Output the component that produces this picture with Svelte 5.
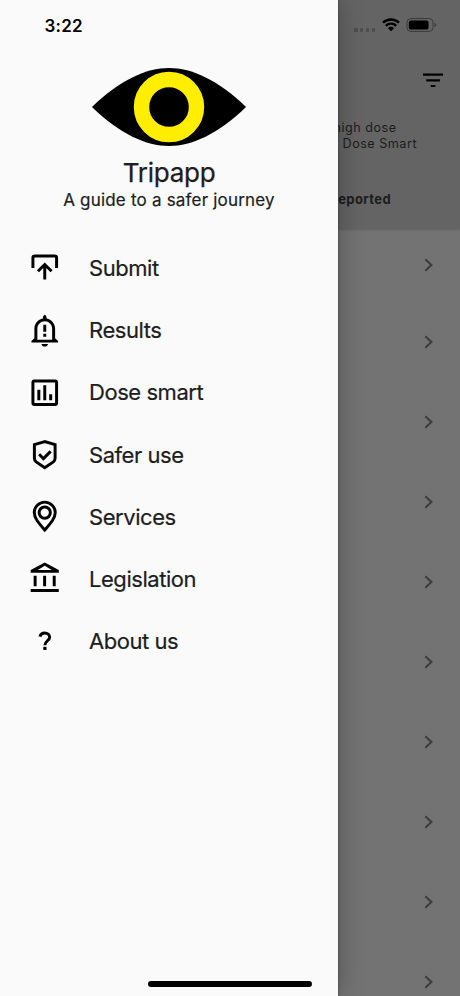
<script lang="ts">
    const menu = [
        { label: 'Submit', icon: 'submit' },
        { label: 'Results', icon: 'results' },
        { label: 'Dose smart', icon: 'dose' },
        { label: 'Safer use', icon: 'safer' },
        { label: 'Services', icon: 'services' },
        { label: 'Legislation', icon: 'legislation' },
        { label: 'About us', icon: 'about' }
    ];
    const reports = Array.from({ length: 10 }, (_, i) => i);
</script>

<div class="screen">
    <div class="page">
        <header class="top">
            <div class="status">
                <span class="signal"><i></i><i></i><i></i><i></i></span>
                <svg class="wifi" width="18" height="14" viewBox="0 0 18 14">
                    <g fill="none" stroke="#000" stroke-width="2.4">
                        <path d="M1 4.7a11.5 11.5 0 0 1 16 0" />
                        <path d="M3.8 7.8a7.4 7.4 0 0 1 10.4 0" />
                    </g>
                    <path d="M9 13.2 5.9 10.3a4.5 4.5 0 0 1 6.2 0z" />
                </svg>
                <svg class="battery" width="31" height="14" viewBox="0 0 31 14">
                    <rect x="1" y=".6" width="26" height="12.8" rx="3.8" fill="none" stroke="#3a3a3a" />
                    <rect x="2.8" y="2.4" width="19.7" height="9.2" rx="2.2" />
                    <path d="M28.5 4.8v4.4c1-.4 1.5-1.2 1.5-2.2s-.5-1.8-1.5-2.2z" fill="#3a3a3a" />
                </svg>
            </div>
            <svg class="filter" width="22" height="16" viewBox="0 0 22 16">
                <path d="M1 1.7h20M4.3 7.4h13.6M8.8 13h4.6" stroke="#000" stroke-width="2.2" />
            </svg>
            <div class="intro">
                <p>high dose</p>
                <p class="wide">or Dose Smart</p>
            </div>
            <p class="reported">Reported</p>
        </header>
        <ul class="reports">
            {#each reports as report (report)}
                <li>
                    <svg width="10" height="14" viewBox="0 0 10 14">
                        <path d="M1.4 1.2 7.4 7l-6 5.8" fill="none" stroke="#3c3c3c" stroke-width="2" />
                    </svg>
                </li>
            {/each}
        </ul>
    </div>

    <nav class="drawer">
        <div class="time">3:22</div>
        <div class="brand">
            <svg width="156" height="80" viewBox="0 0 156 80">
                <path d="M1 40C29 13 55 1 78 1s49 12 77 39c-28 27-54 39-77 39S29 67 1 40z" />
                <circle cx="78" cy="40" r="27.5" fill="none" stroke="#ffee00" stroke-width="15.4" />
            </svg>
            <h1>Tripapp</h1>
            <p>A guide to a safer journey</p>
        </div>
        <ul class="menu">
            {#each menu as item (item.label)}
                <li>
                    <svg class="icon" viewBox="0 0 24 24">
                        {#if item.icon === 'submit'}
                            <path class="line" d="M4 12.2V5.2Q4 4 5.2 4h13.6Q20 4 20 5.2v7M12 20v-9.8M7.4 14.4 12 9.8l4.6 4.6" />
                        {:else if item.icon === 'results'}
                            <path d="M9.8 20.9c.2 1.1 1.1 1.8 2.2 1.8s2-.7 2.2-1.8zM12 5.6c2.76 0 5 2.24 5 5V18H7v-7.4c0-2.76 2.24-5 5-5zm0-4.4c-.7.4-1.2 1-1.3 2.6C7.46 4.45 5 7.25 5 10.6V17l-2 2v1h18v-1l-2-2v-6.4c0-3.35-2.46-6.15-5.7-6.8-.1-1.6-.6-2.2-1.3-2.6z" fill-rule="evenodd" />
                            <path d="M11 8h2v4.6h-2zM11 14h2v2h-2z" />
                        {:else if item.icon === 'dose'}
                            <rect class="line" x="4" y="4" width="16" height="16" rx="1" />
                            <path d="M7 10h2v7H7zM11 7h2v10h-2zM15 13h2v4h-2z" />
                        {:else if item.icon === 'safer'}
                            <path class="line" d="M12 3.1 5 5.2v9.2c0 1 .4 1.8 1.2 2.4L12 20.8l5.8-4c.8-.6 1.2-1.4 1.2-2.4V5.2z" />
                            <path class="line" d="m8.2 11.7 2.9 2.9 4.9-4.9" />
                        {:else if item.icon === 'services'}
                            <path class="line" d="M12 21c-4-4.6-7.1-8-7.1-11.8a7.1 7.1 0 0 1 14.2 0C19.1 13 16 16.4 12 21z" />
                            <circle class="line" cx="12" cy="9.2" r="3.8" />
                        {:else if item.icon === 'legislation'}
                            <path d="M6.5 10h-2v7h2zM12.9 10h-2v7h2zM21.5 19h-19v2h19zM19.4 10h-2v7h2zM12 3.26 16.71 6H7.29zM12 1 2.5 6v2h19V6z" fill-rule="evenodd" />
                        {:else}
                            <path class="line" d="M8.7 9.2c.4-1.5 1.6-2.5 3.3-2.5 1.9 0 3.3 1.2 3.3 2.9 0 2.3-3.2 2.6-3.2 5.4" />
                            <path d="M11 16.1h2.2v2.1H11z" />
                        {/if}
                    </svg>
                    <span>{item.label}</span>
                </li>
            {/each}
        </ul>
    </nav>
    <div class="home-bar"></div>
</div>

<style>
    :global(body) {
        background: #737373;
        font-family: Inter, 'Liberation Sans', sans-serif;
        margin: 0;
    }

    .screen {
        position: relative;
        height: 996px;
        overflow: hidden;
    }

    p,
    h1,
    ul {
        margin: 0;
        padding: 0;
        list-style: none;
    }

    .page {
        background: #737373;
        height: 100%;
    }

    .top {
        display: flex;
        flex-direction: column;
        align-items: flex-end;
        box-sizing: border-box;
        height: 229px;
        background: #646464;
        box-shadow: 0 1px 2px rgba(0, 0, 0, 0.15);
    }

    .status {
        display: flex;
        align-items: center;
        height: 14px;
        padding: 18px 23px 0 0;
    }

    .signal {
        display: flex;
        gap: 2.5px;
        margin: 10px 7px 0 0;
    }

    .signal i {
        width: 3.3px;
        height: 3.5px;
        border-radius: 1px;
        background: #4d4d4d;
    }

    .battery {
        margin-left: 6px;
    }

    .filter {
        margin: 41px 16px 0 0;
    }

    .intro {
        margin: 31px 43px 0 0;
        font-size: 12.6px;
        line-height: 15.5px;
        letter-spacing: 0.5px;
        text-align: right;
        color: #1c1c1c;
    }

    .intro p {
        padding-right: 20.5px;
    }

    .intro .wide {
        padding-right: 0;
    }

    .reported {
        margin: 40px 69px 0 0;
        font-size: 13px;
        line-height: 16px;
        font-weight: 700;
        letter-spacing: 0.4px;
        color: #1c1c1c;
    }

    .reports li {
        display: flex;
        align-items: center;
        justify-content: flex-end;
        height: 80px;
        padding-right: 26px;
    }

    .reports li:first-child {
        height: 71px;
        margin-bottom: 2px;
    }

    .reports svg {
        display: block;
    }

    .drawer {
        position: absolute;
        top: 0;
        left: 0;
        width: 338px;
        height: 100%;
        background: #fafafa;
        box-shadow: 0 0 24px rgba(0, 0, 0, 0.3), 0 0 2px rgba(0, 0, 0, 0.4);
        color: #1d1d1d;
    }

    .time {
        padding: 15px 0 0 44.5px;
        font-size: 17px;
        line-height: 22px;
        font-weight: 600;
        letter-spacing: 0.2px;
        color: #000;
    }

    .brand {
        display: flex;
        flex-direction: column;
        align-items: center;
        padding-top: 30px;
    }

    h1 {
        margin-top: 10px;
        font-size: 26px;
        line-height: 32px;
        font-weight: 400;
        letter-spacing: -0.25px;
        -webkit-text-stroke: 0.25px;
    }

    .brand p {
        font-size: 17px;
        line-height: 22px;
        letter-spacing: 0.2px;
        -webkit-text-stroke: 0.2px;
    }

    .menu {
        padding-top: 26px;
    }

    .menu li {
        display: flex;
        align-items: center;
        height: 62.2px;
        padding-left: 27px;
        font-size: 22px;
        letter-spacing: -0.45px;
    }

    .menu span {
        margin-left: 26.5px;
        -webkit-text-stroke: 0.2px;
    }

    .icon {
        width: 35.5px;
        height: 35.5px;
        fill: #000;
    }

    .line {
        fill: none;
        stroke: #000;
        stroke-width: 2;
    }

    .home-bar {
        position: absolute;
        bottom: 9px;
        left: 148px;
        width: 164px;
        height: 6px;
        border-radius: 3px;
        background: #000;
    }
</style>
